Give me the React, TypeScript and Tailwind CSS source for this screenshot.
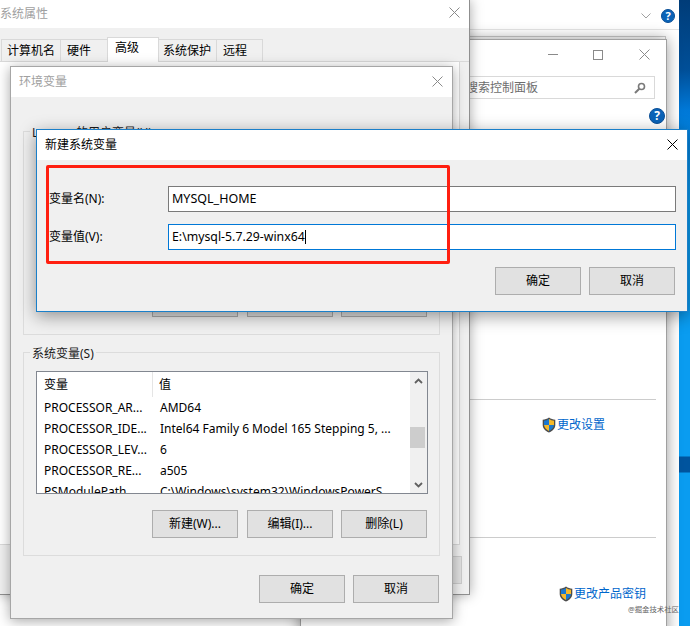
import type { ReactNode } from 'react'

// 窗口叠放的截图：系统属性 > 环境变量 > 新建系统变量
function CloseIcon({ color = '#8a8a8a', className = '' }: { color?: string; className?: string }) {
  return (
    <svg width="11" height="11" viewBox="0 0 11 11" className={`shrink-0 ${className}`}>
      <path d="M0.5 0.5L10.5 10.5M10.5 0.5L0.5 10.5" stroke={color} strokeWidth="1" fill="none" />
    </svg>
  )
}

function HelpIcon({ size }: { size: 'sm' | 'lg' }) {
  const cls =
    size === 'sm' ? 'w-[14px] h-[14px] text-[11px]' : 'w-[16px] h-[16px] text-[12px]'
  return (
    <div
      className={`${cls} rounded-full bg-[#0a63b8] border border-[#0b4f96] text-white font-bold flex items-center justify-center leading-none`}
    >
      ?
    </div>
  )
}

function Shield() {
  return (
    <svg width="14" height="16" viewBox="0 0 14 16" className="shrink-0">
      <path d="M7 0.6C5 2 3 2.6 0.7 2.7V8C0.7 11.5 3.6 14.2 7 15.5C10.4 14.2 13.3 11.5 13.3 8V2.7C11 2.6 9 2 7 0.6Z" fill="#4d4d4d" />
      <path d="M7 2V8H2V3.8C3.8 3.6 5.5 3 7 2Z" fill="#1b78d0" />
      <path d="M7 2V8H12V3.8C10.2 3.6 8.5 3 7 2Z" fill="#f7b92a" />
      <path d="M7 8V14C4.6 13 2.4 11 2 8H7Z" fill="#f7b92a" />
      <path d="M7 8V14C9.4 13 11.6 11 12 8H7Z" fill="#1b78d0" />
    </svg>
  )
}

function ShieldLink({ text, className }: { text: string; className: string }) {
  return (
    <div className={`flex items-center self-end gap-px text-[12px] leading-4 text-[#0066cc] ${className}`}>
      <Shield />
      <span>{text}</span>
    </div>
  )
}

function Btn({ children }: { children: ReactNode }) {
  return (
    <div className="w-[86px] h-[28px] shrink-0 bg-[#e1e1e1] border border-[#adadad] flex items-center justify-center text-[12px] text-black">
      {children}
    </div>
  )
}

function Chevron({ up }: { up?: boolean }) {
  return (
    <div className="h-[17px] flex items-center justify-center">
      <svg width="9" height="6" viewBox="0 0 9 6">
        <path d={up ? 'M1 5L4.5 1.5L8 5' : 'M1 1L4.5 4.5L8 1'} stroke="#606060" strokeWidth="1.8" fill="none" />
      </svg>
    </div>
  )
}

const rows = [
  ['PROCESSOR_AR...', 'AMD64'],
  ['PROCESSOR_IDE...', 'Intel64 Family 6 Model 165 Stepping 5, ...'],
  ['PROCESSOR_LEV...', '6'],
  ['PROCESSOR_RE...', 'a505'],
  ['PSModulePath', 'C:\\Windows\\system32\\WindowsPowerS...'],
]

function VarGroup({ label, items }: { label: string; items: string[][] }) {
  return (
    <div className="relative h-[204px] border border-[#dcdcdc] pl-[12px] pr-[11px] pt-[18px]">
      <div className="absolute left-[6px] -top-[7px] bg-[#f0f0f0] px-[2px] text-[12px] leading-4 text-[#1a1a1a]">
        {label}
      </div>
      <div className="flex h-[123px] border border-[#828790] bg-white overflow-hidden">
        <div className="flex-1 min-w-0 text-[12px]">
          <div className="grid grid-cols-[116px_1fr] h-[25px] items-center">
            <div className="pl-[7px] h-full flex items-center border-r border-[#e5e5e5]">变量</div>
            <div className="pl-[6px]">值</div>
          </div>
          {items.map(([name, value]) => (
            <div key={name} className="grid grid-cols-[116px_1fr] h-[21px] items-center whitespace-nowrap">
              <div className="pl-[7px]">{name}</div>
              <div className="pl-[7px]">{value}</div>
            </div>
          ))}
        </div>
        <div className="w-[17px] shrink-0 bg-[#f0f0f0] flex flex-col">
          <Chevron up />
          <div className="mt-[38px] h-[21px] mr-[2px] bg-[#cdcdcd]" />
          <div className="mt-auto">
            <Chevron />
          </div>
        </div>
      </div>
      <div className="flex justify-end mt-[16px] mr-px">
        <Btn>新建(W)...</Btn>
        <div className="ml-[9px]">
          <Btn>编辑(I)...</Btn>
        </div>
        <div className="ml-[8px]">
          <Btn>删除(L)</Btn>
        </div>
      </div>
    </div>
  )
}

function Tab({ label, active, className }: { label: string; active?: boolean; className: string }) {
  return (
    <div
      className={`${className} flex items-center text-[12px] border-x border-t border-[#d9d9d9] ${
        active ? 'h-[25px] bg-white pb-[4px] relative top-px' : 'h-[22px] bg-[#f0f0f0]'
      }`}
    >
      {label}
    </div>
  )
}

export default function App() {
  return (
    <div className="relative flex w-[690px] h-[626px] overflow-hidden bg-white text-black font-['Noto_Sans','Noto_Sans_CJK_SC',sans-serif]">
      {/* 最底层的资源管理器窗口 */}
      <div className="relative w-[679px] h-full bg-white">
        <div className="flex h-[30px] items-center justify-end border-b border-[#e5e5e5] pt-[2px] pr-[4px] gap-[10px]">
          <svg width="10" height="6" viewBox="0 0 10 6">
            <path d="M0.5 0.5L5 5L9.5 0.5" stroke="#a0a0a0" strokeWidth="1" fill="none" />
          </svg>
          <HelpIcon size="sm" />
        </div>
      </div>
      <div className="w-[11px] h-full bg-[linear-gradient(180deg,#003c78_0px,#004f98_70px,#0078d7_110px,#0a9cf0_200px,#0a9cf0_456px,#00549e_457px,#00549e_472px,#0a9cf0_473px,#0a9cf0_100%)]" />

      {/* 控制面板窗口 */}
      <div className="absolute left-[300px] top-[36px] w-[366px] h-[20px] border border-[#cccccc]" />
      <div className="absolute left-[300px] top-[39px] w-[367px] h-[600px] bg-white border border-[#a0a0a0] shadow-[0_0_14px_rgba(0,0,0,0.4)] flex flex-col text-[#1a1a1a]">
        <div className="flex items-center justify-end h-[19px] mt-[5px] pr-[16px]">
          <div className="w-[10px] h-px bg-[#8a8a8a]" />
          <div className="w-[10px] h-[10px] border border-[#8a8a8a] ml-[35px]" />
          <div className="ml-[36px]">
            <CloseIcon />
          </div>
        </div>
        <div className="self-end mt-[12px] mr-[11px] w-[300px] h-[23px] border border-[#d9d9d9] flex items-center justify-between pl-[110px] pr-[8px] text-[12px] text-[#6d6d6d]">
          <span>搜索控制面板</span>
          <svg width="12" height="12" viewBox="0 0 12 12">
            <circle cx="7.5" cy="4.5" r="3" stroke="#7a7a7a" strokeWidth="1.6" fill="none" />
            <path d="M5.3 6.7L1 11" stroke="#7a7a7a" strokeWidth="2" />
          </svg>
        </div>
        <div className="self-end mt-[9px] mr-[1px]">
          <HelpIcon size="lg" />
        </div>
        <div className="mt-[275px] mr-[10px] h-px bg-[#cccccc]" />
        <ShieldLink text="更改设置" className="mt-[17px] mr-[61px]" />
        <div className="mt-[104px] mr-[10px] h-px bg-[#cccccc]" />
        <ShieldLink text="更改产品密钥" className="mt-[48px] mr-[20px]" />
      </div>

      {/* 系统属性 */}
      <div className="absolute left-0 top-0 w-[470px] h-[595px] bg-[#f0f0f0] border-r border-b border-[#8f8f8f] shadow-[0_0_12px_rgba(0,0,0,0.35)] flex flex-col">
        <div className="h-[28px] bg-white shrink-0 flex items-center justify-between pr-[9px] text-[12px] text-[#a0a0a0]">
          <span>系统属性</span>
          <CloseIcon className="-mt-[3px]" />
        </div>
        <div className="flex items-end h-[34px] shrink-0 pl-[2px] border-b border-[#d9d9d9]">
          <Tab label="计算机名" className="w-[60px] -ml-px pl-[5px]" />
          <Tab label="硬件" className="w-[48px] -ml-px pl-[6px]" />
          <Tab label="高级" active className="w-[52px] -ml-px pl-[7px]" />
          <Tab label="系统保护" className="w-[59px] -ml-px pl-[4px]" />
          <Tab label="远程" className="w-[47px] -ml-px pl-[6px]" />
        </div>
        <div className="w-[460px] h-[483px] bg-white border-r border-b border-[#d9d9d9] shrink-0" />
        <div className="flex justify-end pt-[11px] pr-[7px]">
          <div className="w-[86px] h-[28px] bg-[#e1e1e1] border border-[#cccccc] flex items-center justify-center text-[12px]">
            应用(A)
          </div>
        </div>
      </div>

      {/* 环境变量 */}
      <div className="absolute left-[10px] top-[66px] w-[443px] h-[553px] bg-[#f0f0f0] border border-[#a6a6a6] shadow-[0_2px_12px_rgba(0,0,0,0.35)] flex flex-col">
        <div className="h-[30px] bg-white shrink-0 flex items-center justify-between pl-[8px] pr-[9px] text-[12px] text-[#a0a0a0]">
          <span>环境变量</span>
          <CloseIcon className="-mt-px" />
        </div>
        <div className="flex flex-col px-[12px] pt-[34px]">
          <VarGroup label="Lenovo 的用户变量(U)" items={[]} />
          <div className="mt-[17px]">
            <VarGroup label="系统变量(S)" items={rows} />
          </div>
          <div className="flex justify-end gap-[8px] mt-[19px] mr-px">
            <Btn>确定</Btn>
            <Btn>取消</Btn>
          </div>
        </div>
      </div>

      {/* 新建系统变量 */}
      <div className="absolute left-[36px] top-[129px] w-[652px] h-[183px] bg-[#f0f0f0] border border-[#1a7fc9] shadow-[0_4px_16px_rgba(0,0,0,0.4)] flex flex-col">
        <div className="h-[30px] bg-white shrink-0 flex items-center justify-between pl-[8px] pr-[9px] text-[12px]">
          <span>新建系统变量</span>
          <CloseIcon color="#000000" className="-mt-px" />
        </div>
        <div className="flex flex-col gap-[12px] pt-[26px] pl-[12px] pr-[11px]">
          <div className="flex items-center h-[26px]">
            <span className="w-[119px] text-[12px]">变量名(N):</span>
            <div className="flex-1 h-full bg-white border border-[#7a7a7a] pl-[3px] flex items-center text-[12.5px]">
              MYSQL_HOME
            </div>
          </div>
          <div className="flex items-center h-[26px]">
            <span className="w-[119px] text-[12px]">变量值(V):</span>
            <div className="flex-1 h-full bg-white border border-[#0078d7] pl-[3px] flex items-center text-[12.3px]">
              E:\mysql-5.7.29-winx64
              <span className="w-px h-[14px] bg-black" />
            </div>
          </div>
        </div>
        <div className="flex justify-end gap-[8px] mt-[17px] pr-[12px]">
          <Btn>确定</Btn>
          <Btn>取消</Btn>
        </div>
      </div>

      {/* 截图上手工标注的红框 */}
      <div className="absolute left-[46px] top-[165px] w-[404px] h-[99px] border-[3px] border-[#ff1f10] rounded-[2px]" />

      {/* 水印 */}
      <div className="absolute left-[628px] top-[604px] text-[7.4px] leading-[10px] text-[#666666] whitespace-nowrap">
        @掘金技术社区
      </div>
    </div>
  )
}
